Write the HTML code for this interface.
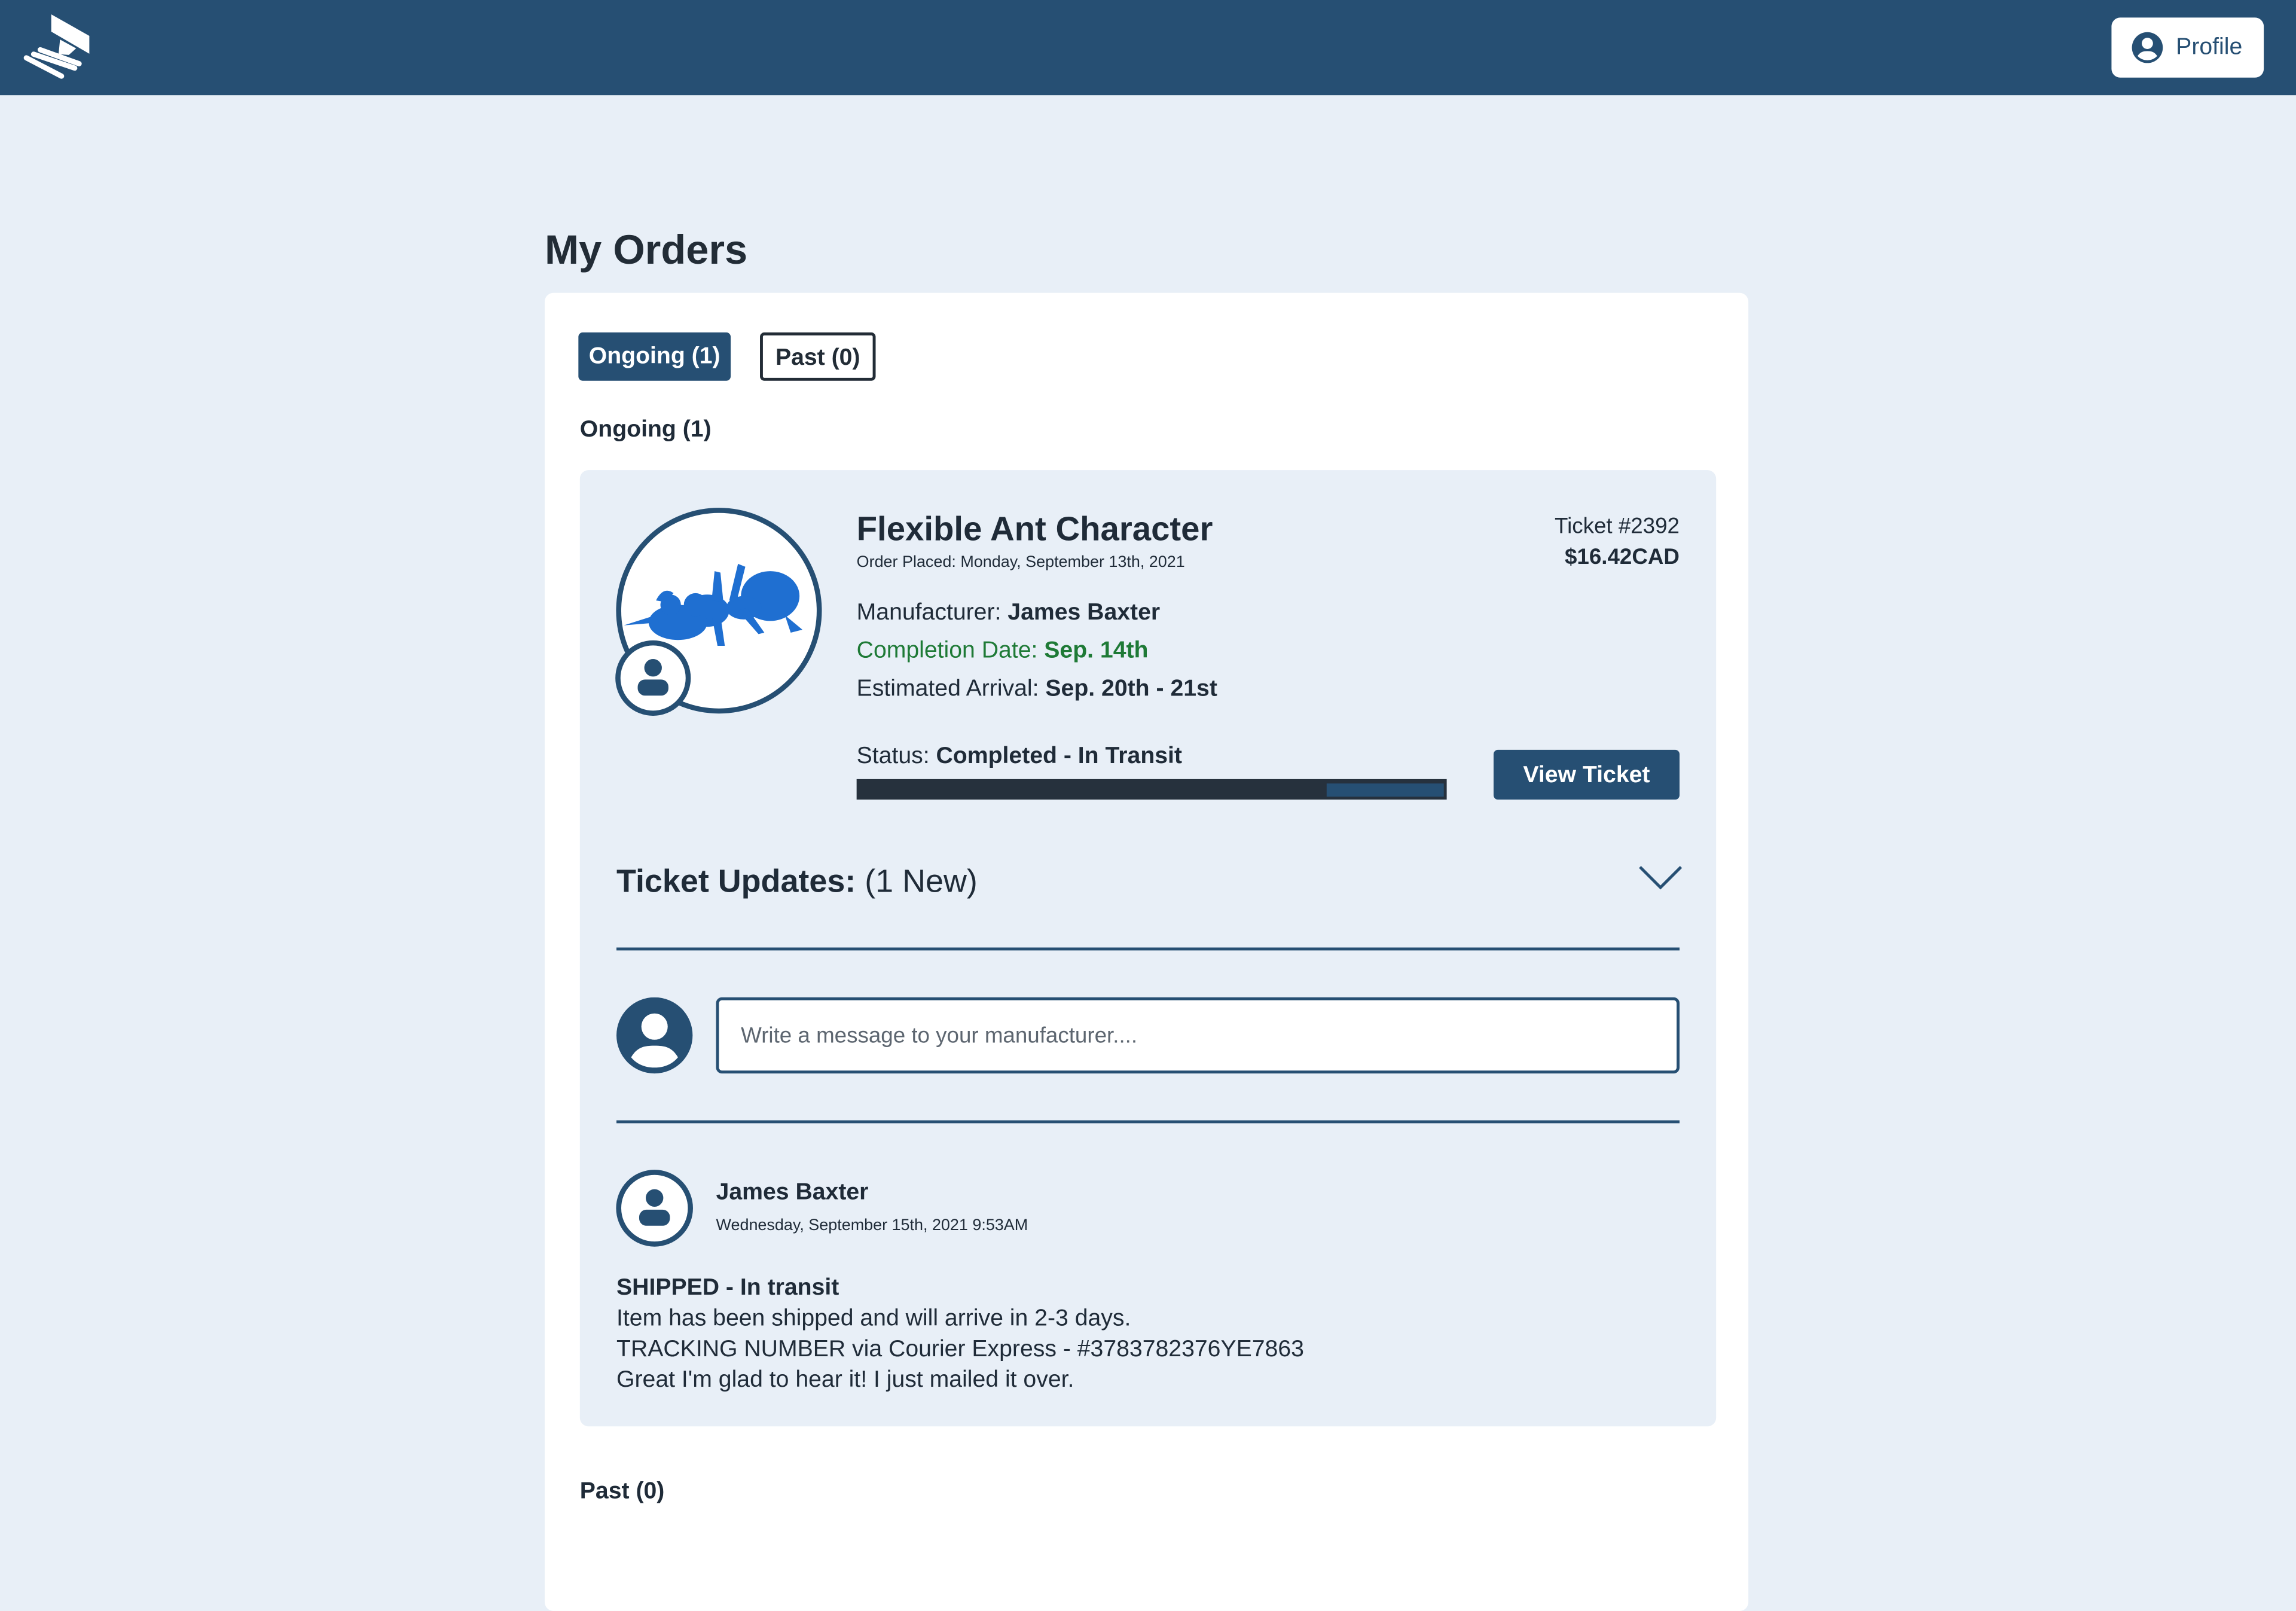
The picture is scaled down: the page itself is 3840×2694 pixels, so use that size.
<!DOCTYPE html>
<html><head><meta charset="utf-8"><style>
html,body{margin:0;padding:0;background:#e8eff7;overflow:hidden}
body{width:3840px;height:2662px}
#w{position:absolute;left:0;top:0;width:1568px;height:1087px;transform:scale(2.44898);transform-origin:0 0;font-family:"Liberation Sans",sans-serif;color:#1f2b38}
.a{position:absolute;white-space:nowrap}
.b{font-weight:bold}
</style></head><body><div id="w">
<div class="a" style="left:0;top:0;width:1568px;height:65px;background:#264f73"></div>
<svg class="a" style="left:0;top:0" width="70" height="60" viewBox="0 0 70 60">
<polygon points="35,9.8 61,24.5 61,36.7 35,21.6" fill="#fff"/>
<polygon points="41,27 52,33 47,37.5 40,37" fill="#fff"/>
<g stroke="#fff" stroke-width="3.6" stroke-linecap="round"><line x1="27.5" y1="34" x2="54" y2="43.5"/><line x1="23" y1="37" x2="51" y2="46.5"/><line x1="18" y1="39.5" x2="42" y2="52"/></g>
</svg>
<div class="a" style="left:1442px;top:12px;width:104px;height:41px;background:#fff;border-radius:6px"></div>
<svg class="a" style="left:1455px;top:21px" width="23" height="23" viewBox="0 0 24 24"><circle cx="12" cy="12" r="11" fill="#264f73"/><circle cx="12" cy="9" r="4" fill="#fff"/><path d="M5 18c2-3 4-3.5 7-3.5s5 .5 7 3.5c-2 2-4 3-7 3s-5-1-7-3z" fill="#fff"/></svg>
<div class="a" style="left:1486px;top:24px;font-size:16px;color:#264f73">Profile</div>
<div class="a b" style="left:372px;top:155px;font-size:28px;color:#222c36">My Orders</div>
<div class="a" style="left:372px;top:200px;width:822px;height:900px;background:#fff;border-radius:6px"></div>
<div class="a b" style="left:395px;top:227px;width:104px;height:33px;background:#264f73;color:#fff;border-radius:3px;font-size:16px;line-height:34px;text-align:center">Ongoing (1)</div>
<div class="a b" style="left:519px;top:227px;width:75px;height:29px;border:2px solid #222c36;color:#222c36;border-radius:3px;font-size:16px;line-height:31px;text-align:center">Past (0)</div>
<div class="a b" style="left:396px;top:285px;font-size:16px">Ongoing (1)</div>
<div class="a" style="left:396px;top:321px;width:776px;height:653px;background:#e8eff7;border-radius:6px"></div>
<svg class="a" style="left:418px;top:345px" width="148" height="148" viewBox="0 0 148 148">
<circle cx="73" cy="72" r="68.5" fill="#fff" stroke="#264f73" stroke-width="3.5"/>
<g fill="#1f6fd1">
<ellipse cx="108" cy="62" rx="20" ry="17"/><ellipse cx="90" cy="70" rx="12" ry="8"/><ellipse cx="65" cy="72" rx="15" ry="11"/>
<ellipse cx="45" cy="80" rx="20" ry="12"/><circle cx="57" cy="68" r="8"/><circle cx="40" cy="68" r="7"/>
<path d="M8 82 L30 75 L32 80 Z"/><path d="M118 75 L130 85 L122 87 Z"/>
<path d="M68 65 L70 45 L74 46 L76 66Z"/><path d="M80 65 L86 40 L91 42 L85 66Z"/>
<path d="M86 72 L100 88 L104 87 L92 70Z"/><path d="M68 75 L72 96 L77 96 L74 75Z"/>
<path d="M30 65 Q35 55 42 60 L36 66Z"/>
</g>
<circle cx="28" cy="118" r="24" fill="#fff" stroke="#264f73" stroke-width="3.5"/>
<circle cx="28" cy="111" r="6" fill="#264f73"/><rect x="17.5" y="119" width="21" height="11" rx="5" fill="#264f73"/>
</svg>
<div class="a b" style="left:585px;top:348px;font-size:23px">Flexible Ant Character</div>
<div class="a" style="left:585px;top:378px;font-size:11px">Order Placed: Monday, September 13th, 2021</div>
<div class="a" style="left:1147px;top:351px;font-size:15px;transform:translateX(-100%)">Ticket #2392</div>
<div class="a b" style="left:1147px;top:372px;font-size:15px;transform:translateX(-100%)">$16.42CAD</div>
<div class="a" style="left:585px;top:410px;font-size:16px">Manufacturer: <b>James Baxter</b></div>
<div class="a" style="left:585px;top:436px;font-size:16px;color:#1e7a36">Completion Date: <b>Sep. 14th</b></div>
<div class="a" style="left:585px;top:462px;font-size:16px">Estimated Arrival: <b>Sep. 20th - 21st</b></div>
<div class="a" style="left:585px;top:508px;font-size:16px">Status: <b>Completed - In Transit</b></div>
<div class="a" style="left:585px;top:532px;width:403px;height:14px;background:#26313d"></div>
<div class="a" style="left:906px;top:535px;width:80px;height:9px;background:#264f73"></div>
<div class="a b" style="left:1020px;top:512px;width:127px;height:34px;background:#264f73;color:#fff;border-radius:3px;font-size:16px;line-height:35px;text-align:center">View Ticket</div>
<div class="a" style="left:421px;top:589px;font-size:22px"><b>Ticket Updates:</b> (1 New)</div>
<svg class="a" style="left:1119px;top:590px" width="30" height="18"><polyline points="1,2 15,16 29,2" fill="none" stroke="#264f73" stroke-width="2"/></svg>
<div class="a" style="left:421px;top:647px;width:726px;height:2px;background:#264f73"></div>
<svg class="a" style="left:420px;top:681px" width="54" height="54" viewBox="0 0 54 54"><circle cx="27" cy="26" r="26" fill="#264f73"/><circle cx="27" cy="20" r="9" fill="#fff"/><path d="M11 41c4-7 9-8 16-8s12 1 16 8c-4 5-10 7-16 7s-12-2-16-7z" fill="#fff"/></svg>
<div class="a" style="left:489px;top:681px;width:654px;height:48px;border:2px solid #264f73;border-radius:4px;background:#fff"></div>
<div class="a" style="left:506px;top:699px;font-size:15px;color:#5d6670">Write a message to your manufacturer....</div>
<div class="a" style="left:421px;top:765px;width:726px;height:2px;background:#264f73"></div>
<svg class="a" style="left:420px;top:798px" width="54" height="54" viewBox="0 0 54 54"><circle cx="27" cy="27" r="24.5" fill="#fff" stroke="#264f73" stroke-width="3.5"/><circle cx="27" cy="20" r="6" fill="#264f73"/><rect x="16.5" y="28" width="21" height="11" rx="5" fill="#264f73"/></svg>
<div class="a b" style="left:489px;top:806px;font-size:16px">James Baxter</div>
<div class="a" style="left:489px;top:831px;font-size:11px">Wednesday, September 15th, 2021 9:53AM</div>
<div class="a" style="left:421px;top:869px;font-size:16px;line-height:21px"><b>SHIPPED - In transit</b><br>Item has been shipped and will arrive in 2-3 days.<br>TRACKING NUMBER via Courier Express - #3783782376YE7863<br>Great I'm glad to hear it! I just mailed it over.</div>
<div class="a b" style="left:396px;top:1010px;font-size:16px">Past (0)</div>
</div></body></html>
